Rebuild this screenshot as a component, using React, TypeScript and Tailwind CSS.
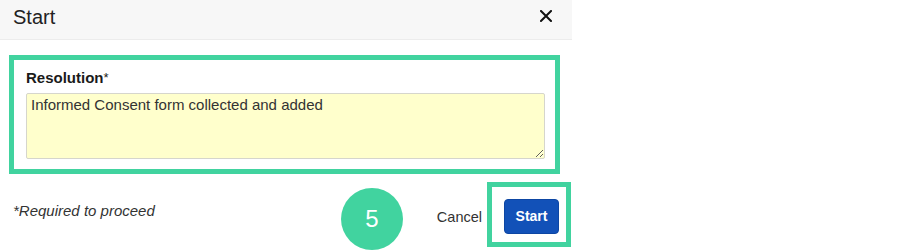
const font = "font-['Liberation_Sans',Arial,sans-serif]";

const CloseIcon = () => (
  <svg width="12" height="12" viewBox="0 0 12 12" className="text-[#111]">
    <path d="M1 1 L11 11 M11 1 L1 11" stroke="currentColor" strokeWidth="2" strokeLinecap="square" />
  </svg>
);

const App = () => {
  return (
    <div className={`w-[901px] h-[250px] bg-white overflow-hidden ${font}`}>
      <div className="w-[572px]">
        {/* header */}
        <div className="h-[40px] bg-[#f7f7f7] border-b border-[#ececec] flex items-center justify-between pl-[13px] pr-[20px]">
          <h1 className="text-[20px] leading-[24px] text-[#222] -mt-[5px]">Start</h1>
          <button className="flex items-center justify-center -mt-[7px]">
            <CloseIcon />
          </button>
        </div>

        {/* form */}
        <div className="pt-[15px] pl-[9px]">
          <div className="w-[551px] h-[119px] border-[5px] border-[#41d39f] pl-[12px] pt-[9px]">
            <label className="block text-[15px] leading-[17px] font-bold text-[#1a1a1a]">
              Resolution<span className="font-normal text-[13px] align-top">*</span>
            </label>
            <textarea
              readOnly
              defaultValue="Informed Consent form collected and added"
              className="block mt-[7px] w-[519px] h-[66px] bg-[#ffffcc] border border-[#d6d6cc] rounded-[2px] px-[4px] pt-[2px] text-[15px] leading-[18px] text-[#333] outline-none"
            />
          </div>
        </div>

        {/* footer */}
        <div className="flex items-start h-[76px]">
          <p className="mt-[27px] pl-[13px] text-[15px] leading-[20px] italic text-[#333] flex-1">
            *Required to proceed
          </p>
          <div className="mt-[14px] w-[62px] h-[62px] rounded-full bg-[#41d39f] flex items-center justify-center text-white text-[24px] leading-none">
            5
          </div>
          <span className="mt-[33px] ml-[34px] text-[14.5px] leading-[20px] text-[#333]">Cancel</span>
          <div className="mt-[8px] ml-[5px] mr-[1px] w-[84px] h-[65px] border-[5px] border-[#41d39f] pl-[12px] pt-[12px]">
            <button className="w-[55px] h-[35px] rounded-[4px] bg-[#1251b8] border border-[#0d46a3] text-white text-[14px] font-bold">
              Start
            </button>
          </div>
        </div>
      </div>
    </div>
  );
};

export default App;
